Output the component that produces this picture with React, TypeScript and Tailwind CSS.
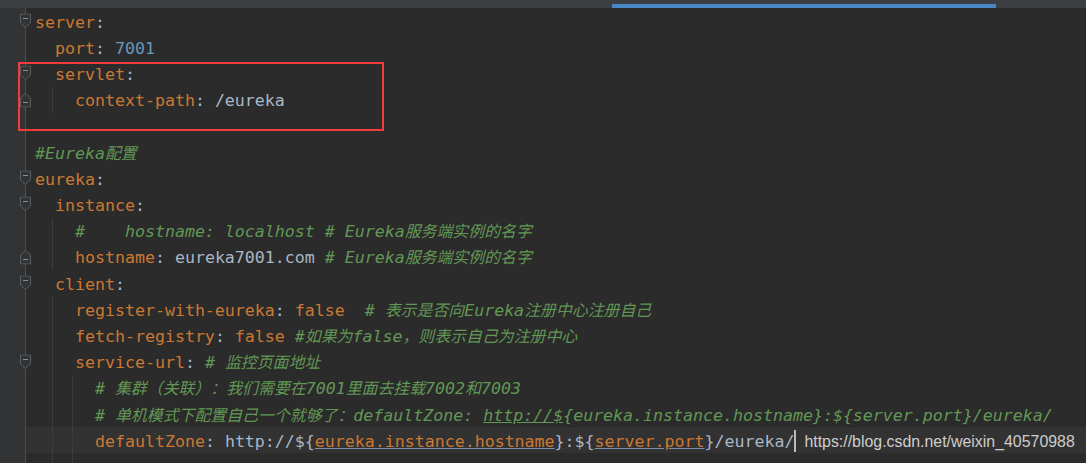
const K = 'text-[#cc7832]';
const P = 'text-[#a9b7c6]';
const N = 'text-[#6897bb]';
const C = 'text-[#629755] italic';
const CU = 'text-[#629755] italic underline decoration-[#629755]';
const KU = 'text-[#cc7832] underline decoration-[#7d8fb0]';

type Line = {
  ind: boolean[];
  segs: [string, string][];
  fold?: 'start' | 'end';
  active?: boolean;
};

const lines: Line[] = [
  { ind: [], fold: 'start', segs: [['server', K], [':', P]] },
  { ind: [false], segs: [['port', K], [': ', P], ['7001', N]] },
  { ind: [false], fold: 'start', segs: [['servlet', K], [':', P]] },
  { ind: [true, false], fold: 'end', segs: [['context-path', K], [': ', P], ['/eureka', P]] },
  { ind: [], segs: [] },
  { ind: [], segs: [['#Eureka配置', C]] },
  { ind: [], fold: 'start', segs: [['eureka', K], [':', P]] },
  { ind: [false], fold: 'start', segs: [['instance', K], [':', P]] },
  { ind: [true, false], segs: [['#    hostname: localhost # Eureka服务端实例的名字', C]] },
  {
    ind: [true, false],
    fold: 'end',
    segs: [['hostname', K], [': ', P], ['eureka7001.com', P], [' ', P], ['# Eureka服务端实例的名字', C]],
  },
  { ind: [false], fold: 'start', segs: [['client', K], [':', P]] },
  {
    ind: [true, false],
    segs: [['register-with-eureka', K], [': ', P], ['false', K], ['  ', P], ['# 表示是否向Eureka注册中心注册自己', C]],
  },
  {
    ind: [true, false],
    segs: [['fetch-registry', K], [': ', P], ['false', K], [' ', P], ['#如果为false，则表示自己为注册中心', C]],
  },
  { ind: [true, false], fold: 'start', segs: [['service-url', K], [': ', P], ['# 监控页面地址', C]] },
  { ind: [true, true, false], segs: [['# 集群（关联）：我们需要在7001里面去挂载7002和7003', C]] },
  {
    ind: [true, true, false],
    segs: [
      ['# 单机模式下配置自己一个就够了：defaultZone: ', C],
      ['http://$', CU],
      ['{eureka.instance.hostname}:${server.port}/eureka/', C],
    ],
  },
  {
    ind: [true, true, false],
    active: true,
    segs: [
      ['defaultZone', K],
      [': ', P],
      ['http://${', P],
      ['eureka.instance.hostname', KU],
      ['}:${', P],
      ['server.port', KU],
      ['}/eureka/', P],
    ],
  },
  { ind: [true, true], segs: [] },
];

// CJK runs are a little narrower than two mono cells in the IDE
function Mixed({ text, cls }: { text: string; cls: string }) {
  const parts = text.split(/([\u3000-\u9fff\uff00-\uffef]+)/);
  return (
    <span className={cls}>
      {parts.map((p, i) =>
        i % 2 === 1 ? (
          <span key={i} className="text-[15.9px]">
            {p}
          </span>
        ) : (
          p
        ),
      )}
    </span>
  );
}

function FoldMark({ kind }: { kind: 'start' | 'end' }) {
  return (
    <svg
      width="12"
      height="15"
      viewBox="0 0 12 15"
      className="absolute left-[20px] top-1/2 -translate-y-1/2 z-10"
    >
      {kind === 'start' ? (
        <>
          <path d="M0.5 0.5H10.5V9.5L5.5 14L0.5 9.5Z" fill="#313335" stroke="#5b5e60" />
          <path d="M3 5H8" stroke="#8c8c8c" />
        </>
      ) : (
        <>
          <path d="M0.5 14.5H10.5V5.5L5.5 1L0.5 5.5Z" fill="#313335" stroke="#5b5e60" />
          <path d="M3 10H8" stroke="#8c8c8c" />
        </>
      )}
    </svg>
  );
}

export default function App() {
  return (
    <div className="relative w-[1086px] h-[463px] overflow-hidden bg-[#2b2b2b] flex flex-col font-['DejaVu_Sans_Mono','Noto_Sans_CJK_SC',monospace] text-[16.6px]">
      {/* tab strip, mostly cut off */}
      <div className="h-[8px] shrink-0 bg-[#3c3f41] flex items-end">
        <div className="w-[612px] shrink-0" />
        <div className="w-[384px] h-[4px] bg-[#4a88c7]" />
      </div>

      <div className="flex flex-col">
        {lines.map((ln, idx) => (
          <div key={idx} className="flex h-[26.2px] shrink-0">
            <div className="relative w-[26px] shrink-0 bg-[#313335] border-r border-[#4e4e4e]">
              {ln.fold && <FoldMark kind={ln.fold} />}
            </div>
            <div
              className={
                'flex flex-1 pl-[9px] whitespace-pre ' + (ln.active ? 'bg-[#323232]' : '')
              }
            >
              {ln.ind.map((g, i) => (
                <div key={i} className="w-[20px] shrink-0 flex">
                  {g && <div className="ml-[17px] w-px bg-[#3c3c3c]" />}
                </div>
              ))}
              <div className="flex items-center pt-[4px] leading-none">
                {ln.segs.map(([t, c], i) => (
                  <Mixed key={i} text={t} cls={c} />
                ))}
                {ln.active && (
                  <>
                    <span className="inline-block w-[2px] h-[22px] -mt-[3px] bg-[#bbbbbb]" />
                    <span className="ml-[8px] font-['Liberation_Sans',sans-serif] text-[15.9px] text-[#cdcdcd] not-italic">
                      https://blog.csdn.net/weixin_40570988
                    </span>
                  </>
                )}
              </div>
            </div>
          </div>
        ))}
      </div>

      {/* red annotation box */}
      <div className="absolute left-[18px] top-[62px] w-[366px] h-[69px] border-2 border-[#f23b3b]" />
    </div>
  );
}
